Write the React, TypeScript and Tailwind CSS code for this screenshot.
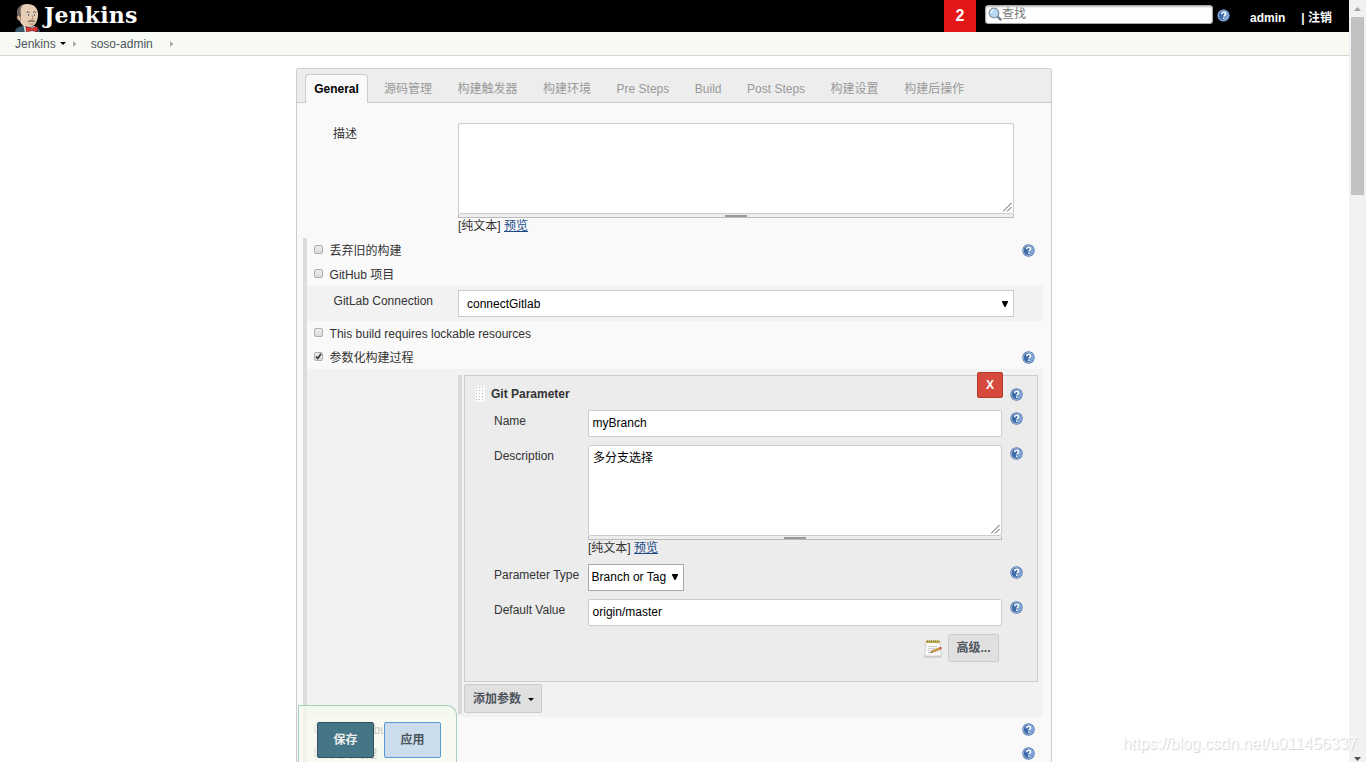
import type { ReactNode } from 'react';
import clsx from 'clsx';

const TABS = [
  'General',
  '源码管理',
  '构建触发器',
  '构建环境',
  'Pre Steps',
  'Build',
  'Post Steps',
  '构建设置',
  '构建后操作',
];

const HelpIcon = ({ className }: { className?: string }) => (
  <svg viewBox="0 0 13 13" className={clsx('block h-[13px] w-[13px]', className)}>
    <circle cx="6.5" cy="6.5" r="6.2" fill="#4a72a8" />
    <circle cx="6.5" cy="6.5" r="5.1" fill="#3d6aa8" stroke="#b3c8e4" strokeWidth="0.8" />
    <path d="M7.5 1.8a4.7 4.7 0 0 1 0 9.4z" fill="#7fa3d3" />
    <path
      d="M4.7 5.2c0-1.2.8-1.9 1.9-1.9s1.9.7 1.9 1.7c0 1.2-1.7 1.3-1.7 2.6"
      fill="none"
      stroke="#fff"
      strokeWidth="1.5"
    />
    <rect x="6" y="8.5" width="1.5" height="1.5" fill="#fff" />
  </svg>
);

const ButlerLogo = () => (
  <svg viewBox="0 0 28 30" className="block h-[30px] w-7">
    <path d="M1 30c0-4 2-6 7-7l11 0c5 1 7 3 7 7z" fill="#35566a" />
    <path d="M9 21l4 5 8-3v7h-10z" fill="#dcdcdc" />
    <path d="M4 13C2 6 6 1 13 1c7 0 11 4 11 10 0 7-3 13-9 13-4 0-8-2-9-6-2 0-3-3-2-5z" fill="#e6cdb4" />
    <path d="M4 14C1.500 8 4 3 9 1.500 6.500 5 6 8 7 11c.3 2-.5 3-1 4z" fill="#6b6460" />
    <path d="M4 12.500c-2 .5-1 5.500 2.500 5 .5-2 0-5-2.500-5z" fill="#d8b597" stroke="#6a5446" strokeWidth=".5" />
    <path d="M12.500 9.500q1.500-1.500 3.200 0M19 9.500q1.500-1.500 3 0" fill="none" stroke="#5a4a40" strokeWidth=".9" />
    <path d="M12.800 11.200h3v1.600h-3zM19 11.200h3v1.600h-3z" fill="#f6f0e8" />
    <circle cx="14.500" cy="12" r=".8" fill="#222" />
    <circle cx="20.500" cy="12" r=".8" fill="#222" />
    <path d="M18 12l1.400 4-1.900.5" fill="none" stroke="#a67c5e" strokeWidth=".8" />
    <path d="M13.500 19q1.500-2.500 4.500-1.500 3-.5 3.500 1.500-4-1-8 0z" fill="#5d4f46" />
    <path d="M15.500 20.800q2 1 4 0" fill="none" stroke="#8a5a48" strokeWidth=".8" />
    <path d="M12 23.500l5.500 2 6-2v5.500l-5.500-1.500-5.500 1.500z" fill="#d9322f" stroke="#7c1717" strokeWidth=".5" />
    <circle cx="18" cy="26.200" r="1.300" fill="#f25550" stroke="#7c1717" strokeWidth=".4" />
  </svg>
);

const SearchIcon = () => (
  <svg viewBox="0 0 14 14" className="block h-3.5 w-3.5 shrink-0">
    <path d="M9 9l3.600 3.600" stroke="#6f7f8c" strokeWidth="2.400" strokeLinecap="round" />
    <circle cx="6" cy="6" r="4.800" fill="#b7d7f1" stroke="#8296a8" strokeWidth="1.300" />
    <path d="M3 6a3 3 0 0 1 3-3" fill="none" stroke="#fff" strokeWidth="1.200" />
  </svg>
);

const NotepadIcon = () => (
  <svg viewBox="0 0 20 20" className="block h-5 w-5">
    <path d="M1.500 17.500h17v1h-17z" fill="#b9b9b9" />
    <path d="M3 3h14l1.300 14H1.700z" fill="#f8f8f8" stroke="#c2c2c2" strokeWidth=".7" />
    <path d="M3 1.500h14v2.500H3z" fill="#b9ad55" />
    <path d="M4 1.500h1v1.500H4zM6 1.500h1v1.500H6zM8 1.500h1v1.500H8zM10 1.500h1v1.500h-1zM12 1.500h1v1.500h-1zM14 1.500h1v1.500h-1z" fill="#8d8032" />
    <path d="M5 7.500h9M5 9.500h7M5 11.500h4M5 13.500h2" stroke="#c4c4c4" strokeWidth=".8" />
    <path d="M7.500 13.800l1.800-2.300 7.500-3 .9 1.800-7.500 3z" fill="#dba548" stroke="#8c6420" strokeWidth=".5" />
    <path d="M16.300 8.500l1.500-.6q1.400.2 1.200 1.600l-1.700.8z" fill="#d8534a" />
    <path d="M7.500 13.800l.9-1.100.6.800z" fill="#333" />
  </svg>
);

const Caret = ({ className }: { className?: string }) => (
  <svg viewBox="0 0 6 3" className={clsx('block h-[3px] w-1.5', className)}>
    <path d="M0 0h6L3 3z" fill="#000" />
  </svg>
);

const Crumb = ({ className }: { className?: string }) => (
  <svg viewBox="0 0 4 6" className={clsx('block h-1.5 w-1', className)}>
    <path d="M0 0l3.500 3L0 6z" fill="#aaa" />
  </svg>
);

const SelectArrow = () => (
  <svg viewBox="0 0 6 6" className="block h-1.5 w-1.5 shrink-0">
    <path d="M0 0h6v1L3.500 6h-1L0 1z" fill="#000" />
  </svg>
);

const Checkbox = ({ checked }: { checked?: boolean }) => (
  <span className="block h-[9px] w-[9px] rounded-[2px] border border-[#adadad] bg-linear-to-b from-[#ececec] to-[#dcdcdc]">
    {checked && (
      <svg viewBox="0 0 7 7" className="block h-[7px] w-[7px]">
        <path d="M1 3.500l1.800 2L6 .8" fill="none" stroke="#333" strokeWidth="1.600" />
      </svg>
    )}
  </span>
);

const OptionRow = ({ label, checked, help }: { label: string; checked?: boolean; help?: boolean }) => (
  <div className="flex h-6 items-start pl-[7px]">
    <div className="pt-[7px]">
      <Checkbox checked={checked} />
    </div>
    <span className="ml-[6.6px] flex-1 leading-[26px]">{label}</span>
    {help && <HelpIcon className="mt-1.5 mr-2" />}
  </div>
);

const TextArea = ({ value, dark }: { value?: string; dark?: boolean }) => (
  <div>
    <div className="relative h-[91px] rounded-[2px] border border-[#ccc] bg-white px-1 pt-1 leading-4 text-black">
      {value}
      <svg viewBox="0 0 9 9" className="absolute right-px bottom-px h-[9px] w-[9px]">
        <path d="M0 8.500L8.500 0M4 8.500L8.500 4" stroke="#555" strokeWidth="1" />
      </svg>
    </div>
    <div
      className={clsx(
        'flex h-1 items-center justify-center border border-t-0 border-[#bbb] pt-px',
        dark ? 'bg-[#ececec]' : 'bg-[#eee]'
      )}
    >
      <div className="h-0.5 w-[22px] bg-[#999]" />
    </div>
    <div className="h-4 leading-4">
      [纯文本] <a className="text-[#204a87] underline">预览</a>
    </div>
  </div>
);

const TextInput = ({ value }: { value: string }) => (
  <div className="h-[27px] rounded-[2px] border border-[#ccc] bg-white px-[3.6px] leading-6 text-black">{value}</div>
);

const FieldRow = ({ label, tall, children }: { label: string; tall?: boolean; children: ReactNode }) => (
  <div className={clsx('grid grid-cols-[94px_414px_21px]', tall ? 'h-[119px]' : 'h-[35px]')}>
    <label className="leading-[22px] whitespace-nowrap">{label}</label>
    <div>{children}</div>
    <HelpIcon className="mt-0.5 ml-[7.5px]" />
  </div>
);

function Header() {
  return (
    <header className="flex h-8 bg-black text-white">
      <div className="flex w-[944px] overflow-hidden pt-[3px] pl-[14px]">
        <ButlerLogo />
        <span className="ml-0.5 font-['DejaVu_Serif',serif] text-[22px] leading-6 font-bold tracking-[0.15px]">
          Jenkins
        </span>
      </div>
      <div className="flex h-8 w-8 items-center justify-center bg-[#e31717] text-base font-bold">2</div>
      <div className="mt-[5px] ml-[9px] flex h-[19px] w-[228px] items-center rounded-[3px] border border-[#aaa] bg-white pb-px pl-0.5 text-[#777] shadow-[inset_0_1px_2px_#bbb]">
        <SearchIcon />
        <span className="leading-4">查找</span>
      </div>
      <HelpIcon className="mt-[9px] ml-1" />
      <span className="ml-5 pt-[2px] leading-8 font-bold">admin</span>
      <span className="ml-4 pt-[2px] leading-8 font-bold">| 注销</span>
    </header>
  );
}

function GitParameter() {
  return (
    <div className="relative h-[307px] w-[574px] border border-[#ccc] bg-[#ececec]">
      <div className="flex h-[34px] items-start pl-2.5">
        <div className="mt-2.5 h-4 w-2.5 bg-[#fafafa] bg-[radial-gradient(#bbb_0.8px,transparent_1px)] bg-size-[3px_3px]" />
        <b className="ml-1.5 flex-1 pt-[10px] leading-4 text-[#333]">Git Parameter</b>
        <HelpIcon className="mt-3 mr-[14.5px]" />
      </div>
      <button className="absolute -top-1 right-[34px] h-[26px] w-[26px] rounded-[2px] border border-[#b43a2a] bg-[#d54a3c] font-bold text-white">
        X
      </button>
      <div className="pl-[29px]">
        <FieldRow label="Name">
          <TextInput value="myBranch" />
        </FieldRow>
        <FieldRow label="Description" tall>
          <TextArea value="多分支选择" dark />
        </FieldRow>
        <FieldRow label="Parameter Type">
          <div className="flex h-[27px] w-24 items-center justify-between border border-[#a9a9a9] bg-white pr-[5px] pb-px pl-[2.600px] text-black">
            Branch or Tag
            <SelectArrow />
          </div>
        </FieldRow>
        <FieldRow label="Default Value">
          <TextInput value="origin/master" />
        </FieldRow>
        <div className="flex w-[505px] justify-end">
          <div className="mt-[5px] mr-[5px]">
            <NotepadIcon />
          </div>
          <button className="h-7 w-[51px] rounded-[2px] border border-[#ccc] bg-[#e0e0e0] pb-px font-bold whitespace-nowrap text-[#4d545d]">
            高级...
          </button>
        </div>
      </div>
    </div>
  );
}

function ConfigPanel() {
  return (
    <div className="mt-3 ml-[296px] w-[756px] rounded-t-[3px] border border-b-0 border-[#ccc] bg-[#f9f9f9]">
      <div className="flex h-[34px] items-end rounded-t-[2px] border-b border-[#ccc] bg-[#ededed] pl-2 text-[#999]">
        {TABS.map((tab, i) => (
          <div
            key={tab}
            className={clsx(
              'shrink-0 whitespace-nowrap',
              i === 0
                ? '-mb-px mr-[3.2px] h-[29px] w-[63px] rounded-t-[4px] border border-b-0 border-[#ccc] bg-[#f9f9f9] text-center leading-7 font-bold text-black'
                : 'h-7 px-[12.77px] leading-[30px]'
            )}
          >
            {tab}
          </div>
        ))}
      </div>

      <div className="flex h-[135px] pt-5">
        <span className="ml-9 w-[125px] leading-[22px]">描述</span>
        <div className="w-[556px]">
          <TextArea />
        </div>
      </div>

      <div className="ml-1.5 w-[740px] border-l-4 border-[#ddd]">
        <OptionRow label="丢弃旧的构建" help />
        <OptionRow label="GitHub 项目" />
        <div className="flex h-[35px] bg-[#f2f2f2] pt-1">
          <span className="ml-[26.600px] w-[124.400px] leading-[22px]">GitLab Connection</span>
          <div className="flex h-[27px] w-[556px] items-center justify-between border border-[#ccc] bg-white pr-[5px] pl-2 text-black">
            connectGitlab
            <SelectArrow />
          </div>
        </div>
        <OptionRow label="This build requires lockable resources" />
        <OptionRow label="参数化构建过程" checked help />
        <div className="h-[348px] bg-[#f2f2f2] pt-1.5 pl-[151px]">
          <div className="h-[339px] border-l-4 border-[#d9d9d9] pl-0.5">
            <GitParameter />
            <button className="mt-0.5 flex h-[29px] w-[78px] items-center rounded-[2px] border border-[#ccc] bg-[#e0e0e0] pl-2 font-bold text-[#4d545d]">
              添加参数
              <Caret className="mt-px ml-[7px]" />
            </button>
          </div>
        </div>
        <OptionRow label="Throttle builds" help />
        <OptionRow label="关闭构建" help />
      </div>
    </div>
  );
}

export default function App() {
  return (
    <div className="relative flex h-[762px] w-[1366px] overflow-hidden bg-white font-['Liberation_Sans','Noto_Sans_CJK_SC',sans-serif] text-xs text-[#333]">
      <div className="w-[1349px]">
        <Header />
        <nav className="flex h-6 items-center border-b border-[#d3d7cf] bg-[#f6faf2] pl-[15px] text-[#4d545d]">
          <span>Jenkins</span>
          <Caret className="ml-1" />
          <Crumb className="ml-[7px]" />
          <span className="ml-[14px]">soso-admin</span>
          <Crumb className="ml-[17px]" />
        </nav>
        <ConfigPanel />
      </div>

      {/* page scrollbar */}
      <div className="flex w-[17px] flex-col items-center bg-[#f1f1f1]">
        <svg viewBox="0 0 7 4" className="mt-[7px] h-1 w-[7px] shrink-0">
          <path d="M3.500 0L7 4H0z" fill="#a3a3a3" />
        </svg>
        <div className="mt-1.5 h-[178px] w-[13px] bg-[#c1c1c1]" />
        <svg viewBox="0 0 7 4" className="mt-auto mb-px h-1 w-[7px] shrink-0">
          <path d="M0 0h7L3.500 4z" fill="#505050" />
        </svg>
      </div>

      {/* sticky save bar */}
      <div className="absolute bottom-0 left-[298px] flex h-[57px] w-[159px] gap-2.5 rounded-tr-[10px] border border-b-0 border-[#a4cfb8] bg-[#f5f9ec]/75 pt-4 pl-[18px]">
        <button className="h-9 w-[57px] rounded-[2px] border border-[#2f5362] bg-[#457687] pb-px font-bold text-[#eee]">
          保存
        </button>
        <button className="h-9 w-[57px] rounded-[2px] border border-[#5c97d6] bg-[#cbdced] pb-px font-bold text-[#4d545d]">
          应用
        </button>
      </div>

      <div className="absolute right-[9px] bottom-[8px] text-[16px] leading-5 tracking-[-0.03px] text-white [text-shadow:1px_1px_1px_#d0d0d0]">
        https://blog.csdn.net/u011456337
      </div>
    </div>
  );
}
